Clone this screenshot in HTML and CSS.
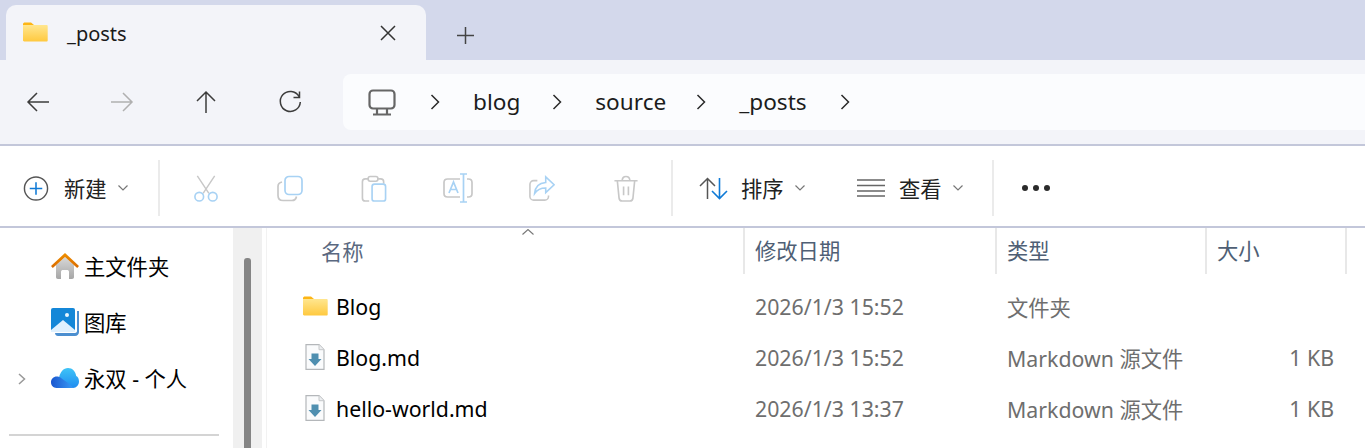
FILE: index.html
```html
<!DOCTYPE html>
<html lang="zh-CN">
<head>
  <meta charset="UTF-8" />
  <meta name="viewport" content="width=device-width, initial-scale=1.0"/>
  <title>_posts</title>
  <link rel="stylesheet" href="styles.css">
</head>
<body>
  <svg class="defs" width="0" height="0">
    <defs>
      <linearGradient id="folderFill" x1="0" y1="0" x2="0" y2="1">
        <stop offset="0" stop-color="#ffe68f"/>
        <stop offset="1" stop-color="#ffc93f"/>
      </linearGradient>
      <linearGradient id="roofFill" x1="0" y1="0" x2="0" y2="1">
        <stop offset="0" stop-color="#f09000"/>
        <stop offset="1" stop-color="#d86a00"/>
      </linearGradient>
      <linearGradient id="wallFill" x1="0" y1="0" x2="0" y2="1">
        <stop offset="0" stop-color="#d8d8d8"/>
        <stop offset="1" stop-color="#a6a6a6"/>
      </linearGradient>
      <linearGradient id="cloudBack" x1="0" y1="0" x2="0" y2="1">
        <stop offset="0" stop-color="#3fc4f7"/>
        <stop offset="1" stop-color="#1f8cf0"/>
      </linearGradient>
      <linearGradient id="cloudFront" x1="0" y1="0" x2="1" y2="0">
        <stop offset="0" stop-color="#1a56cf"/>
        <stop offset="1" stop-color="#3a9bf5"/>
      </linearGradient>
      <symbol id="folder" viewBox="0 0 25 20">
        <path d="M0 2.500C0 1 .8.500 2 .5h6l3 2.500H0z" fill="#fdb515"/>
        <path d="M0 3h23.500c.8 0 1.200.5 1.200 1.200v14.100c0 .8-.5 1.200-1.200 1.200H1.200C.5 19.500 0 19 0 18.300z" fill="url(#folderFill)"/>
      </symbol>
      <symbol id="mdfile" viewBox="0 0 20 26">
        <path d="M1 .7h13l5 5v19.600H1z" fill="#fafbfc" stroke="#b4b7ba" stroke-width="1.200"/>
        <path d="M14 .7v5h5" fill="#eceef0" stroke="#c6c8ca" stroke-width="1"/>
        <path d="M6.500 9.500h7V15h3L10 22l-6.500-7h3z" fill="#4f8fb0"/>
      </symbol>
    </defs>
  </svg>

  <header class="tabstrip">
    <div class="tab">
      <svg class="tab-folder"><use href="#folder"/></svg>
      <span class="tab-title">_posts</span>
      <svg class="tab-close" viewBox="0 0 16 16"><path d="M1 1l14 14M15 1L1 15" class="line"/></svg>
    </div>
    <svg class="tab-new" viewBox="0 0 17 17"><path d="M8.500 0v17M0 8.500h17" class="line"/></svg>
  </header>

  <nav class="navbar">
    <div class="nav-buttons">
      <svg class="nav-icon" viewBox="0 0 24 24"><path d="M23 12H2M11 3l-9 9 9 9" class="line"/></svg>
      <svg class="nav-icon off" viewBox="0 0 24 24"><path d="M1 12h21M13 3l9 9-9 9" class="line"/></svg>
      <svg class="nav-icon" viewBox="0 0 24 24"><path d="M12 23V2M3 11l9-9 9 9" class="line"/></svg>
      <svg class="nav-icon" viewBox="0 0 24 24"><path d="M21 6.500A10 10 0 1 0 22.300 12M21.500 1.500v6h-6" class="line"/></svg>
    </div>
    <div class="address">
      <svg class="pc" viewBox="0 0 28 27"><rect x="1.500" y="1.500" width="25" height="18" rx="3.500" class="thick"/><path d="M9 19.500v5M19 19.500v5M5 25.500h18" class="thick"/></svg>
      <svg class="crumb-arrow" viewBox="0 0 10 16"><path d="M1.500 1l7 7-7 7" class="line"/></svg>
      <span class="crumb first">blog</span>
      <svg class="crumb-arrow" viewBox="0 0 10 16"><path d="M1.500 1l7 7-7 7" class="line"/></svg>
      <span class="crumb">source</span>
      <svg class="crumb-arrow" viewBox="0 0 10 16"><path d="M1.500 1l7 7-7 7" class="line"/></svg>
      <span class="crumb last">_posts</span>
      <svg class="crumb-arrow" viewBox="0 0 10 16"><path d="M1.500 1l7 7-7 7" class="line"/></svg>
    </div>
  </nav>

  <section class="toolbar">
    <div class="tool new">
      <svg class="tool-icon" viewBox="0 0 27 27"><circle cx="13.500" cy="13.500" r="12" fill="none" stroke="#555" stroke-width="1.500"/><path d="M13.500 7v13M7 13.500h13" fill="none" stroke="#0f7ad6" stroke-width="1.600"/></svg>
      <span class="tool-label">新建</span>
      <svg class="caret" viewBox="0 0 10 6"><path d="M.5.500L5 5 9.500.5"/></svg>
    </div>
    <span class="sep"></span>
    <div class="disabled-tools">
      <svg class="tool-icon" viewBox="0 0 26 28"><path d="M4 1l12 18M22 1L10 19" fill="none" stroke="#c8c8c8" stroke-width="1.500"/><circle cx="6" cy="22.500" r="4.500" class="blue"/><circle cx="20" cy="22.500" r="4.500" class="blue"/></svg>
      <svg class="tool-icon" viewBox="0 0 26 26"><path d="M5 6.500C2.500 7 1 8.500 1 11v9c0 3 2 5 5 5h9c2.500 0 4-1.500 4.500-4" class="grey"/><rect x="8" y="1" width="17" height="18" rx="4" class="blue"/></svg>
      <svg class="tool-icon" viewBox="0 0 26 28"><path d="M7 4H4C2.300 4 1 5.300 1 7v17c0 1.700 1.300 3 3 3h4M17 4h3c1.700 0 3 1.300 3 3v2" class="grey"/><rect x="7" y="1.500" width="10" height="5" rx="2" class="grey"/><rect x="11" y="9.500" width="14" height="17.500" rx="2.500" class="blue"/></svg>
      <svg class="tool-icon wide" viewBox="0 0 30 30"><path d="M17 6H4.500C2.500 6 1 7.500 1 9.500v11C1 22.500 2.500 24 4.500 24H17M24 6h1.500C27.500 6 29 7.500 29 9.500v11c0 2-1.500 3.500-3.500 3.500H24" class="grey"/><path d="M17 1h7M17 29h7M20.500 1v28M6 20l4.500-11L15 20M7.500 16.500h6" class="blue"/></svg>
      <svg class="tool-icon" viewBox="0 0 28 27"><path d="M9 5H5C2.800 5 1 6.800 1 9v13c0 2.200 1.800 4 4 4h12c2.200 0 4-1.800 4-4v-1" class="grey"/><path d="M18 1l9 8.500-9 8.500v-5c-5 0-9 1.500-12 6 .5-6.500 4.500-11.500 12-12z" class="blue"/></svg>
      <svg class="tool-icon" viewBox="0 0 26 28"><path d="M1 6h24M9 6c0-2.500 1.500-4.500 4-4.500S17 3.500 17 6M4 6l1.800 18c.2 1.800 1.400 3 3.200 3h8c1.800 0 3-1.200 3.200-3L22 6M10.500 12v9M15.500 12v9" class="grey"/></svg>
    </div>
    <span class="sep"></span>
    <div class="tool sort">
      <svg class="tool-icon" viewBox="0 0 29 23"><path d="M8.500 22V1.500M1 9l7.500-7.500L16 9" fill="none" stroke="#555" stroke-width="1.500"/><path d="M20.500 1v20.500M13 14l7.500 7.500L28 14" fill="none" stroke="#0f7ad6" stroke-width="1.600"/></svg>
      <span class="tool-label">排序</span>
      <svg class="caret" viewBox="0 0 10 6"><path d="M.5.500L5 5 9.500.5"/></svg>
    </div>
    <div class="tool view">
      <svg class="tool-icon" viewBox="0 0 28 18"><path d="M0 1h28M0 6.500h28M0 12h28M0 17h28" fill="none" stroke="#666" stroke-width="1.500"/></svg>
      <span class="tool-label">查看</span>
      <svg class="caret" viewBox="0 0 10 6"><path d="M.5.500L5 5 9.500.5"/></svg>
    </div>
    <span class="sep"></span>
    <div class="more"><i></i><i></i><i></i></div>
  </section>

  <main class="content">
    <aside class="sidebar">
      <div class="side-item">
        <svg class="side-icon" viewBox="0 0 28 26"><path d="M5 12L14 4l9 8v12c0 1-.7 2-2 2h-3v-7c0-1.500-1-2-2-2h-4c-1 0-2 .5-2 2v7H7c-1.300 0-2-1-2-2z" fill="url(#wallFill)"/><path d="M14 0L28 13l-1.800 2L14 4 1.800 15 0 13z" fill="url(#roofFill)"/></svg>
        <span>主文件夹</span>
      </div>
      <div class="side-item">
        <svg class="side-icon" viewBox="0 0 28 28"><path d="M4 25h20c1 0 2-1 2-2V3h2v21c0 2-1.500 4-4 4H7c-1.500 0-3-1-3-3z" fill="#4c8fd0"/><rect width="24" height="24" rx="2" fill="#1487d8"/><circle cx="16" cy="7" r="2" fill="#e8f6ff"/><path d="M0 22l12-10 12 10v2H0z" fill="#dff1ff"/></svg>
        <span>图库</span>
      </div>
      <div class="side-item">
        <svg class="side-chevron" viewBox="0 0 8 12"><path d="M1 1l5.500 5L1 11"/></svg>
        <svg class="side-icon" viewBox="0 0 28 20"><path d="M8 10C9 4 12.500 0 17 0c4.500 0 7.500 3.500 8.200 8 1.800.8 2.800 3 2.800 5.500 0 3.500-2.500 6.500-6 6.500H10z" fill="url(#cloudBack)"/><path d="M5.500 20C2.300 20 0 17.500 0 14.300 0 11 2.500 8.500 5.800 8.500c1.700 0 3 .5 4.200 1.500l7 5 5.500 5z" fill="url(#cloudFront)"/></svg>
        <span>永双 - 个人</span>
      </div>
      <hr class="side-rule">
    </aside>
    <div class="scrolltrack"><div class="scrollthumb"></div></div>
    <div class="files">
      <div class="row head">
        <div class="cell name">名称<svg class="sort-up" viewBox="0 0 12 6"><path d="M.5 5.500L6 .5l5.500 5"/></svg></div>
        <div class="cell">修改日期</div>
        <div class="cell">类型</div>
        <div class="cell">大小</div>
      </div>
      <div class="row">
        <div class="cell name"><svg class="file-icon"><use href="#folder"/></svg>Blog</div>
        <div class="cell">2026/1/3 15:52</div>
        <div class="cell">文件夹</div>
        <div class="cell size"></div>
      </div>
      <div class="row">
        <div class="cell name"><svg class="file-icon md"><use href="#mdfile"/></svg>Blog.md</div>
        <div class="cell">2026/1/3 15:52</div>
        <div class="cell">Markdown 源文件</div>
        <div class="cell size">1 KB</div>
      </div>
      <div class="row">
        <div class="cell name"><svg class="file-icon md"><use href="#mdfile"/></svg>hello-world.md</div>
        <div class="cell">2026/1/3 13:37</div>
        <div class="cell">Markdown 源文件</div>
        <div class="cell size">1 KB</div>
      </div>
    </div>
  </main>
</body>
</html>
```

FILE: styles.css
```css
html, body {
  margin: 0;
  height: 448px;
  overflow: hidden;
}
body {
  background: #fff;
  font-family: "Noto Sans", "Noto Sans CJK SC", sans-serif;
  color: #1a1a1a;
}
.defs { position: absolute; }
svg { flex: none; }
.line { fill: none; stroke: currentColor; stroke-width: 1.5; }
.thick { fill: none; stroke: #666; stroke-width: 2.2; }

.tabstrip {
  height: 60px;
  box-sizing: border-box;
  background: #d3d8eb;
  padding: 5px 0 0 6px;
  display: flex;
  align-items: center;
}
.tab {
  width: 420px;
  height: 55px;
  box-sizing: border-box;
  background: #f3f4f9;
  border-radius: 10px 10px 0 0;
  display: flex;
  align-items: center;
  padding: 0 30px 0 17px;
}
.tab-folder { width: 25px; height: 20px; margin-bottom: 1px; }
.tab-title { font-size: 20px; margin-left: 19px; flex: 1; padding-top: 2px; }
.tab-close { width: 16px; height: 16px; color: #333; margin-top: 1px; }
.tab-new { width: 17px; height: 17px; margin: 5px 0 0 31px; color: #444; }

.navbar {
  height: 86px;
  box-sizing: border-box;
  background: #f3f4f9;
  border-bottom: 2px solid #c3c7da;
  display: flex;
  align-items: center;
}
.nav-buttons {
  width: 343px;
  display: flex;
  gap: 60px;
  padding-left: 26px;
  box-sizing: border-box;
  color: #3c3c3c;
}
.nav-icon { width: 24px; height: 24px; }
.nav-icon.off { color: #b0b0b0; }
.address {
  flex: 1;
  height: 56px;
  background: #fbfcfe;
  border-radius: 8px 0 0 8px;
  display: flex;
  align-items: center;
  padding-left: 25px;
  font-size: 22.6px;
}
.pc { width: 28px; height: 27px; margin-right: 34px; }
.crumb-arrow { width: 10px; height: 16px; color: #2a2a2a; margin-right: 33px; }
.crumb { margin-right: 30px; padding-bottom: 2px; color: #1c1c1c; }
.crumb.first { margin-right: 32px; }
.crumb.last { margin-right: 33px; }

.toolbar {
  height: 82px;
  box-sizing: border-box;
  padding-top: 4px;
  border-bottom: 2px solid #c3c7da;
  display: flex;
  align-items: center;
}
.tool { display: flex; align-items: center; }
.tool-icon { width: 26px; height: 27px; }
.tool-label { font-size: 21.3px; margin: 0 0 2px 15px; color: #222; }
.caret { width: 10px; height: 6px; margin-left: 11px; fill: none; stroke: #777; stroke-width: 1.200; }
.sep { width: 2px; height: 56px; background: #ebebeb; }
.new { width: 158px; padding-left: 23px; box-sizing: border-box; }
.disabled-tools {
  width: 511px;
  box-sizing: border-box;
  padding-left: 33px;
  display: flex;
  align-items: center;
  gap: 58px;
}
.disabled-tools .wide { width: 30px; height: 30px; margin: 0 -2px; }
.blue { fill: none; stroke: #a8d2f4; stroke-width: 1.700; }
.grey { fill: none; stroke: #c8c8c8; stroke-width: 1.700; }
.sort { width: 157px; padding-left: 26px; box-sizing: border-box; }
.sort .tool-icon { width: 29px; height: 23px; }
.sort .tool-label { margin-left: 13px; }
.view { width: 162px; padding-left: 27px; box-sizing: border-box; }
.view .tool-icon { width: 28px; height: 18px; }
.view .tool-label { margin-left: 14px; }
.more { display: flex; gap: 5px; margin-left: 28px; }
.more i { width: 6px; height: 6px; border-radius: 50%; background: #2b2b2b; }

.content { display: flex; height: 220px; }
.sidebar {
  width: 233px;
  box-sizing: border-box;
  padding: 10px 14px 0 9px;
  flex: none;
}
.side-item {
  height: 56px;
  display: flex;
  align-items: center;
  padding-left: 42px;
  font-size: 21.3px;
  color: #000;
  position: relative;
}
.side-item span { margin: 0 0 2px 5px; }
.side-icon { width: 28px; height: 28px; }
.side-chevron {
  position: absolute;
  left: 9px;
  top: 23px;
  width: 8px;
  height: 12px;
  fill: none;
  stroke: #999;
  stroke-width: 1.500;
}
.side-rule { border: 0; height: 2px; background: #d4d4d4; margin: 0; margin-top: 28px; }
.scrolltrack {
  width: 29px;
  background: #f0f0f0;
  flex: none;
  box-sizing: border-box;
  padding: 30px 11px 0;
}
.scrollthumb { height: 190px; background: #858585; border-radius: 3px 3px 0 0; }

.files {
  flex: 1;
  margin-left: 4px;
  border-left: 1px solid #f2f2f2;
}
.row {
  display: grid;
  grid-template-columns: 478px 252px 210px 140px;
  height: 51px;
  align-items: center;
  font-size: 21.3px;
  color: #6e6e6e;
}
.row .cell { padding-left: 10px; white-space: nowrap; }
.row .name {
  padding-left: 36px;
  color: #000;
  display: flex;
  align-items: center;
}
.row .size { text-align: right; padding: 0 13px 0 0; }
.head { height: 46px; margin-bottom: 7px; align-items: stretch; color: #4f5f75; }
.head .cell { border-right: 2px solid #e8e8e8; box-sizing: border-box; line-height: 45px; }
.head .name { color: #5a6880; padding-left: 54px; position: relative; }
.sort-up {
  position: absolute;
  left: 255px;
  top: 1px;
  width: 12px;
  height: 6px;
  fill: none;
  stroke: #777;
  stroke-width: 1.100;
}
.file-icon { width: 25px; height: 20px; margin-right: 8px; margin-bottom: 2px; }
.file-icon.md { width: 20px; height: 26px; margin: 0 11px 2px 2px; }
```
